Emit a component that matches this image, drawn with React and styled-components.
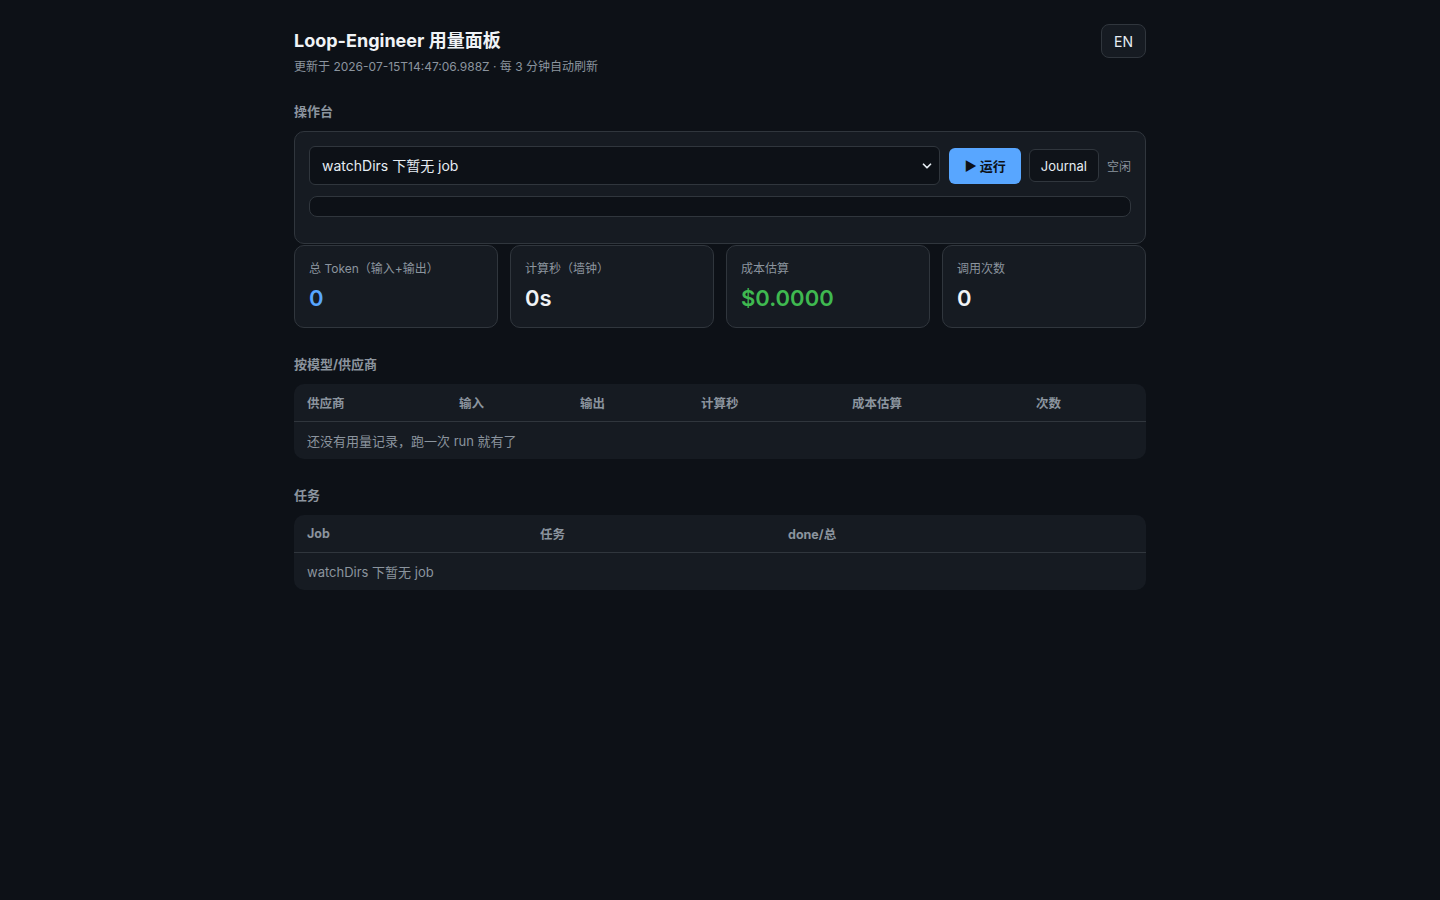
import React, { useState } from 'react';
import styled, { createGlobalStyle } from 'styled-components';
import { ChevronDown } from 'lucide-react';

const GlobalStyle = createGlobalStyle`
  html, body {
    margin: 0;
    padding: 0;
    background: #0d1117;
    color: #e6edf3;
    font-family: Inter, "Noto Sans CJK SC", "Noto Sans", sans-serif;
  }
  * { box-sizing: border-box; }
`;

const Page = styled.div`
  min-height: 100vh;
  background: #0d1117;
`;

const Container = styled.main`
  max-width: 900px;
  margin: 0 auto;
  padding: 24px;
`;

const Header = styled.header`
  display: flex;
  justify-content: space-between;
  align-items: flex-start;
`;

const Title = styled.h1`
  margin: 4px 0 0;
  font-size: 18px;
  font-weight: 700;
  line-height: 26px;
  color: #f0f3f6;
`;

const Subtitle = styled.div`
  margin-top: 4px;
  font-size: 12px;
  line-height: 18px;
  color: #8b949e;
`;

const LangButton = styled.button`
  height: 34px;
  padding: 0 12px;
  background: #161b22;
  border: 1px solid #30363d;
  border-radius: 8px;
  color: #e6edf3;
  font: inherit;
  font-size: 14px;
  cursor: pointer;
`;

const SectionTitle = styled.h2`
  margin: ${p => (p.$first ? '26px' : '27px')} 0 11px;
  font-size: 13px;
  font-weight: 700;
  line-height: 18px;
  color: #8b949e;
`;

const Panel = styled.section`
  background: #161b22;
  border: 1px solid #30363d;
  border-radius: 10px;
  padding: 14px 14px 26px;
`;

const Controls = styled.div`
  display: flex;
  align-items: center;
  gap: 8px;
`;

const SelectWrap = styled.div`
  position: relative;
  flex: 1;
  margin-right: 1px;
`;

const Select = styled.select`
  width: 100%;
  height: 39px;
  padding: 0 28px 0 12px;
  appearance: none;
  background: #0d1117;
  border: 1px solid #30363d;
  border-radius: 6px;
  color: #e6edf3;
  font: inherit;
  font-size: 14px;
  outline: none;
`;

const Chevron = styled(ChevronDown)`
  position: absolute;
  right: 6px;
  top: 50%;
  transform: translateY(-50%);
  color: #e6edf3;
  pointer-events: none;
`;

const RunButton = styled.button`
  height: 36px;
  padding: 0 15px;
  background: #58a6ff;
  border: none;
  border-radius: 6px;
  color: #0d1117;
  font: inherit;
  font-size: 13px;
  font-weight: 700;
  display: flex;
  align-items: center;
  gap: 3px;
  cursor: pointer;
`;

const GhostButton = styled.button`
  height: 33px;
  padding: 0 11px;
  background: #0f1319;
  border: 1px solid #30363d;
  border-radius: 6px;
  color: #e6edf3;
  font: inherit;
  font-size: 13px;
  cursor: pointer;
`;

const Status = styled.span`
  font-size: 12px;
  color: #8b949e;
`;

const Progress = styled.div`
  margin-top: 11px;
  height: 21px;
  background: #0d1117;
  border: 1px solid #30363d;
  border-radius: 8px;
  overflow: hidden;
`;

const ProgressFill = styled.div`
  height: 100%;
  background: #58a6ff;
`;

const Stats = styled.div`
  display: grid;
  grid-template-columns: repeat(4, 1fr);
  gap: 12px;
  margin-top: 1px;
`;

const StatCard = styled.div`
  height: 83px;
  padding: 14px 14px;
  background: #161b22;
  border: 1px solid #30363d;
  border-radius: 10px;
`;

const StatLabel = styled.div`
  font-size: 12px;
  line-height: 18px;
  color: #8b949e;
`;

const StatValue = styled.div`
  margin-top: 6px;
  font-size: 22px;
  font-weight: 600;
  line-height: 28px;
  color: ${p => p.$color || '#f0f3f6'};
`;

const Table = styled.table`
  width: 100%;
  border-collapse: separate;
  border-spacing: 0;
  table-layout: fixed;
  background: #161b22;
  border-radius: 10px;
  overflow: hidden;
  font-size: 13px;
`;

const Th = styled.th`
  height: 38px;
  padding: 0 13px;
  text-align: left;
  font-weight: 700;
  font-size: 12.5px;
  color: #8b949e;
  border-bottom: 1px solid #30363d;
`;

const Td = styled.td`
  height: 37px;
  padding: 0 13px;
  color: #8b949e;
`;

const usageCols = [
  ['供应商', 152],
  ['输入', 121],
  ['输出', 121],
  ['计算秒', 151],
  ['成本估算', 184],
  ['次数', 123],
];

const jobCols = [
  ['Job', 233],
  ['任务', 248],
  ['done/总', 371],
];

const DataTable = ({ cols, empty }) => (
  <Table>
    <colgroup>
      {cols.map(([name, w]) => (
        <col key={name} style={{ width: w }} />
      ))}
    </colgroup>
    <thead>
      <tr>
        {cols.map(([name]) => (
          <Th key={name}>{name}</Th>
        ))}
      </tr>
    </thead>
    <tbody>
      <tr>
        <Td colSpan={cols.length}>{empty}</Td>
      </tr>
    </tbody>
  </Table>
);

const App = () => {
  const [progress] = useState(0);

  return (
    <Page>
      <GlobalStyle />
      <Container>
        <Header>
          <div>
            <Title>Loop-Engineer 用量面板</Title>
            <Subtitle>更新于 2026-07-15T14:47:06.988Z · 每 3 分钟自动刷新</Subtitle>
          </div>
          <LangButton>EN</LangButton>
        </Header>

        <SectionTitle $first>操作台</SectionTitle>
        <Panel>
          <Controls>
            <SelectWrap>
              <Select defaultValue="">
                <option value="">watchDirs 下暂无 job</option>
              </Select>
              <Chevron size={14} strokeWidth={3} />
            </SelectWrap>
            <RunButton>▶ 运行</RunButton>
            <GhostButton>Journal</GhostButton>
            <Status>空闲</Status>
          </Controls>
          <Progress>
            <ProgressFill style={{ width: `${progress}%` }} />
          </Progress>
        </Panel>

        <Stats>
          <StatCard>
            <StatLabel>总 Token（输入+输出）</StatLabel>
            <StatValue $color="#58a6ff">0</StatValue>
          </StatCard>
          <StatCard>
            <StatLabel>计算秒（墙钟）</StatLabel>
            <StatValue>0s</StatValue>
          </StatCard>
          <StatCard>
            <StatLabel>成本估算</StatLabel>
            <StatValue $color="#3fb950">$0.0000</StatValue>
          </StatCard>
          <StatCard>
            <StatLabel>调用次数</StatLabel>
            <StatValue>0</StatValue>
          </StatCard>
        </Stats>

        <SectionTitle>按模型/供应商</SectionTitle>
        <DataTable cols={usageCols} empty="还没有用量记录，跑一次 run 就有了" />

        <SectionTitle>任务</SectionTitle>
        <DataTable cols={jobCols} empty="watchDirs 下暂无 job" />
      </Container>
    </Page>
  );
};

export default App;
